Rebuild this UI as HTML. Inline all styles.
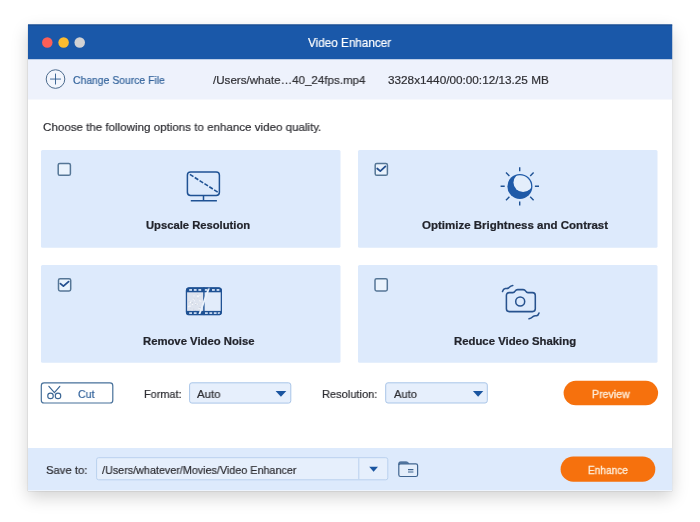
<!DOCTYPE html>
<html><head><meta charset="utf-8"><title>Video Enhancer</title>
<style>
*{box-sizing:border-box;margin:0;padding:0}
html,body{width:700px;height:522px;background:#fff;overflow:hidden}
body{font-family:"Liberation Sans",sans-serif;position:relative}
.a{position:absolute}
.t{position:absolute;white-space:nowrap;line-height:20px;height:20px;will-change:transform}
.t{-webkit-text-stroke:.2px}
#t_l1,#t_l2,#t_l3,#t_l4{-webkit-text-stroke:.22px}
#t_prev,#t_enh{-webkit-text-stroke:.35px}
#win{left:28px;top:25px;width:644px;height:465.5px;background:#fff;box-shadow:0 6px 16px rgba(0,0,0,.18),0 0 1px rgba(0,0,0,.3)}
.cb{position:absolute;width:13.4px;height:13.3px;border:1.3px solid #4d7196;background:#eaf3fd;border-radius:2px}
.sel{position:absolute;border:1px solid #a6c3e6;background:#e6effc;border-radius:2.5px}
.btn{position:absolute;background:#f6710d;border-radius:13px}
</style></head><body>
<div id="win" class="a"></div>
<svg class="a" style="left:0;top:0" width="700" height="522" viewBox="0 0 700 522">
 <rect x="28" y="24.5" width="644.2" height="466" fill="#fff"/>
 <rect x="28" y="24.5" width="644.2" height="35" fill="#1a58a9"/>
 <rect x="28" y="24.5" width="644.2" height="1" fill="#18488a"/>
 <rect x="28" y="59.5" width="644.2" height="40" fill="#eef2fc"/>
 <rect x="28" y="448" width="644.2" height="42.5" fill="#ddeafc"/>
 <circle cx="47.3" cy="42.5" r="5.25" fill="#fc5f57"/>
 <circle cx="63.6" cy="42.5" r="5.25" fill="#fdbc2e"/>
 <circle cx="79.7" cy="42.5" r="5.25" fill="#d2d2d4"/>
 <g fill="#ddeafc">
  <rect x="41" y="150.1" width="299.5" height="97.6" rx="1.5"/>
  <rect x="358" y="150.1" width="299.5" height="97.6" rx="1.5"/>
  <rect x="41" y="265" width="299.5" height="97.7" rx="1.5"/>
  <rect x="358" y="265" width="299.5" height="97.7" rx="1.5"/>
 </g>
</svg>
<svg class="a" style="left:44px;top:68px" width="24" height="24" viewBox="0 0 24 24"><circle cx="11.5" cy="11.05" r="9.3" fill="#f3f6fd" stroke="#4d6c8e" stroke-width="1"/><path d="M11.5 5.6v10.900000M6.050000 11.05h10.900000" stroke="#2c5a8c" stroke-width=".9" fill="none"/></svg>


<svg class="a" style="left:0;top:0" width="700" height="400" viewBox="0 0 700 400">
<g fill="#eaf3fd" stroke="#557696" stroke-width="1.5">
  <rect x="58.2" y="163.4" width="12.2" height="11.900000" rx="1.600000"/>
  <rect x="375.200000" y="163.4" width="12.200000" height="11.900000" rx="1.600000"/>
  <rect x="58.500000" y="278.750000" width="12.200000" height="12.200000" rx="1.600000"/>
  <rect x="375" y="278.750000" width="12.300000" height="12.200000" rx="1.600000"/>
 </g>
 <g fill="none" stroke="#234e8e" stroke-width="1.800000" stroke-linecap="round" stroke-linejoin="round">
  <path d="M377.200000 168.500000L380.300000 171.100000L385.400000 166.400000"/>
  <path d="M60.400000 283.600000L63.400000 286.100000L68.600000 281.600000"/>
 </g>
</svg>

<!-- monitor icon -->
<svg class="a" style="left:180px;top:165px" width="48" height="42" viewBox="0 0 48 42">
 <rect x="7.4" y="6.9" width="32" height="23.6" rx="3.2" fill="none" stroke="#1f5294" stroke-width="1.5"/>
 <path d="M23.5 30.5v5.2M10.8 35.7h26.1" stroke="#1f5294" stroke-width="1.5" fill="none"/>
 <path d="M9.9 9.4L37.8 27.2" stroke="#1f5294" stroke-width="1.6" stroke-dasharray="4.2 1.55" fill="none"/>
</svg>

<!-- brightness icon -->
<svg class="a" style="left:496px;top:162px" width="48" height="48" viewBox="0 0 48 48">
 <defs><clipPath id="sc"><circle cx="23.9" cy="24.4" r="11.25"/></clipPath></defs>
 <g stroke="#1f5294" stroke-width="1.4" fill="none">
  <path d="M23.7 5.2v4.1M23.7 39.5v4.1M4.6 24.3h4.1M38.9 24.3h4.1"/>
  <path d="M10 10.600000l3.400000 3.400000M37.600000 10.600000l-3.400000 3.400000M10 38.2l3.400000-3.400000M37.600000 38.2l-3.400000-3.400000"/>
 </g>
 <circle cx="23.9" cy="24.4" r="12.5" fill="#1f5aa8"/>
 <circle cx="27.1" cy="20.5" r="9.600000" fill="#e4eefb" clip-path="url(#sc)"/>
</svg>

<!-- film icon -->
<svg class="a" style="left:180px;top:282px" width="48" height="40" viewBox="0 0 48 40">
 <defs><clipPath id="fc"><rect x="5.8" y="5.3" width="36.2" height="28" rx="3.5"/></clipPath></defs>
 <g clip-path="url(#fc)">
  <rect x="5.8" y="5.3" width="36.2" height="28" fill="#e2ecfa"/>
  <rect x="5.8" y="5.3" width="18" height="28" fill="#dcdfe8" opacity=".6"/>
  <rect x="11.5" y="20.3" width="1.5" height="1.2" fill="#c9cfdb"/><rect x="16.4" y="21.3" width="1.2" height="1.2" fill="#f0f3f9"/><rect x="11.4" y="27.9" width="1.5" height="1" fill="#f0f3f9"/><rect x="17.3" y="13.6" width="1.5" height="1.2" fill="#ffffff"/><rect x="8.2" y="24.2" width="0.8" height="1" fill="#ffffff"/><rect x="19.3" y="25.0" width="1.5" height="1.2" fill="#c9cfdb"/><rect x="18.4" y="25.9" width="1.5" height="1.2" fill="#f0f3f9"/><rect x="19.6" y="18.6" width="1.2" height="0.8" fill="#ffffff"/><rect x="8.5" y="19.4" width="1.5" height="1.2" fill="#c9cfdb"/><rect x="20.4" y="18.2" width="1.2" height="1.2" fill="#f0f3f9"/><rect x="16.5" y="20.9" width="0.8" height="1" fill="#c9cfdb"/><rect x="10.4" y="25.6" width="0.8" height="1.2" fill="#d4d9e4"/><rect x="17.5" y="21.8" width="1.2" height="1" fill="#d4d9e4"/><rect x="9.8" y="19.2" width="0.8" height="1" fill="#f0f3f9"/><rect x="19.6" y="18.0" width="0.8" height="1" fill="#ffffff"/><rect x="14.2" y="18.1" width="0.8" height="1.2" fill="#f4f7fc"/><rect x="16.9" y="11.8" width="1.2" height="1.2" fill="#d4d9e4"/><rect x="15.3" y="28.0" width="0.8" height="0.8" fill="#c9cfdb"/><rect x="9.6" y="20.1" width="1.5" height="1" fill="#ffffff"/><rect x="16.9" y="13.7" width="1.2" height="1" fill="#f4f7fc"/><rect x="13.2" y="13.4" width="1.5" height="1" fill="#f0f3f9"/><rect x="20.6" y="17.6" width="0.8" height="1.2" fill="#d4d9e4"/><rect x="11.9" y="21.8" width="1.2" height="1" fill="#ffffff"/><rect x="22.2" y="19.9" width="1.2" height="0.8" fill="#d4d9e4"/><rect x="19.4" y="27.8" width="0.8" height="1" fill="#c9cfdb"/><rect x="16.9" y="21.7" width="1.2" height="1" fill="#f4f7fc"/><rect x="13.1" y="26.6" width="1.2" height="1.2" fill="#d4d9e4"/><rect x="15.1" y="21.0" width="1.2" height="1" fill="#f4f7fc"/><rect x="17.1" y="16.1" width="1.2" height="0.8" fill="#d4d9e4"/><rect x="13.3" y="16.3" width="1.2" height="1" fill="#c9cfdb"/><rect x="19.4" y="12.8" width="1" height="1" fill="#f4f7fc"/><rect x="15.3" y="22.1" width="1" height="1" fill="#c9cfdb"/><rect x="10.7" y="18.4" width="0.8" height="1.2" fill="#f4f7fc"/><rect x="12.7" y="16.7" width="1.5" height="0.8" fill="#ffffff"/><rect x="9.2" y="23.6" width="1.5" height="1" fill="#ffffff"/>
  <rect x="5.8" y="5.3" width="36.2" height="5" fill="#1f5294"/>
  <rect x="5.8" y="28.9" width="36.2" height="4.4" fill="#1f5294"/>
  <g fill="#dbe8fa">
   <rect x="9.2" y="7.1" width="2.8" height="1.7"/><rect x="13.8" y="7.1" width="2.8" height="1.7"/><rect x="18.4" y="7.1" width="2.8" height="1.7"/><rect x="24.6" y="7.1" width="2.400000" height="1.7"/><rect x="32" y="7.1" width="2.8" height="1.7"/><rect x="36.6" y="7.1" width="2.8" height="1.7"/>
   <rect x="9.2" y="30.3" width="2.8" height="1.6"/><rect x="13.8" y="30.3" width="2.8" height="1.6"/><rect x="25" y="30.3" width="2.8" height="1.6"/><rect x="29.4" y="30.3" width="2.8" height="1.6"/><rect x="33.8" y="30.3" width="2.8" height="1.6"/><rect x="37.800000" y="30.3" width="2.2" height="1.6"/>
  </g>
  <path d="M23.9 5.3v28" stroke="#1f5294" stroke-width="1.4"/>
  <path d="M29.5 4.5L18.700000 34" stroke="#eaf2fc" stroke-width="1.9"/>
 </g>
 <rect x="6.45" y="5.95" width="34.9" height="26.7" rx="3" fill="none" stroke="#1f5294" stroke-width="1.3"/>
</svg>

<!-- camera icon -->
<svg class="a" style="left:496px;top:279px" width="48" height="46" viewBox="0 0 48 46">
 <g fill="none" stroke="#27528e" stroke-width="1.55" stroke-linecap="round" stroke-linejoin="round">
  <path d="M13.2 13.6h3.6c1.2 0 1.7-.5 2.3-1.5c.7-1.1 1.3-1.5 2.6-1.5h5.4c1.3 0 1.9.4 2.6 1.5c.6 1 1.1 1.5 2.3 1.5h4.5c1.7 0 2.8 1.1 2.8 2.8v13.4c0 1.7-1.100000 2.800000-2.800000 2.800000h-23.300000c-1.700000 0-2.800000-1.100000-2.800000-2.800000v-13.400000c0-1.700000 1.100000-2.800000 2.800000-2.800000z"/>
  <circle cx="24.2" cy="22.4" r="4.5"/>
  <path d="M6.500000 12.400000c.5-1.600000 1.400000-2.600000 2.800000-2.800000c1.400000-.2 2.100000.2 3.200000-.6c1.200000-.9 1.500000-2.100000 4.300000-2.500000"/>
  <path d="M33 39.800000c2.800000-.4 3.100000-1.600000 4.300000-2.500000c1.100000-.8 1.800000-.4 3.200000-.6c1.400000-.2 2.100000-1.200000 2.500000-2.700000"/>
 </g>
</svg>

<!-- controls -->
<svg class="a" style="left:0;top:370px" width="700" height="120" viewBox="0 370 700 120">
 <rect x="41.3" y="382.9" width="71.5" height="20.1" rx="2.8" fill="#fff" stroke="#47709a" stroke-width="1.2"/>
 <g fill="none" stroke="#3a6594" stroke-width="1.15" stroke-linecap="round" stroke-linejoin="round">
  <circle cx="50.5" cy="395.9" r="2.75"/><circle cx="58" cy="395.9" r="2.75"/>
  <path d="M48.9 386.3L54.4 392.7L59.8 386.3"/>
 </g>
 <g fill="#e6effc" stroke="#a9c5e8" stroke-width="1">
  <rect x="189.6" y="382.8" width="101.2" height="20.3" rx="2.3"/>
  <rect x="385.7" y="382.8" width="101.6" height="20.2" rx="2.3"/>
  <rect x="96.6" y="457.7" width="291.2" height="22.1" rx="2" stroke="#bad1ee"/>
 </g>
 <path d="M358.8 458.2v21.1" stroke="#bad1ee" stroke-width="1" fill="none"/>
 <g fill="#1a55a0">
  <path d="M275.6 391h10.700000l-5.350000 5.800000z"/>
  <path d="M472.900000 391h10.400000l-5.200000 5.800000z"/>
  <path d="M369.200000 466.800000h8.800000l-4.400000 4.900000z"/>
 </g>
 <rect x="563.6" y="380.8" width="94.5" height="24.5" rx="12.25" fill="#f6710d"/>
 <rect x="560.6" y="456.5" width="94.7" height="25.3" rx="12.65" fill="#f6710d"/>
 <!-- folder -->
 <path d="M398.800000 465v-1.700000c0-.9.5-1.400000 1.400000-1.400000h6.300000c.9 0 1.300000.3 1.800000 1.000000l1.100000 2.100000z" fill="#5d7fa8" stroke="#3f648f" stroke-width="1"/>
 <rect x="398.800000" y="463.800000" width="18.800000" height="12.700000" rx="1.800000" fill="#e4eefb" stroke="#3f648f" stroke-width="1.2"/>
 <path d="M408 469.600000h5.400000M408 472h5.400000" stroke="#3f648f" stroke-width="1.100000" fill="none"/>
</svg>

<div id="t_title" class="t" style="left:307.90px;top:32.71px;font-size:12.1px;font-weight:normal;color:#fff;transform-origin:0 50%;transform:scaleX(0.9692)">Video Enhancer</div>
<div id="t_change" class="t" style="left:72.60px;top:70.29px;font-size:10.7px;font-weight:normal;color:#33639b;transform-origin:0 50%;transform:scaleX(0.9717)">Change Source File</div>
<div id="t_file" class="t" style="left:212.80px;top:69.98px;font-size:11.6px;font-weight:normal;color:#2f2f34;transform-origin:0 50%;transform:scaleX(0.9978)">/Users/whate…40_24fps.mp4</div>
<div id="t_info" class="t" style="left:387.70px;top:70.28px;font-size:11.6px;font-weight:normal;color:#2f2f34;transform-origin:0 50%;transform:scaleX(1.0140)">3328x1440/00:00:12/13.25 MB</div>
<div id="t_choose" class="t" style="left:43.20px;top:116.95px;font-size:11.7px;font-weight:normal;color:#2c2c31;transform-origin:0 50%;transform:scaleX(0.9903)">Choose the following options to enhance video quality.</div>
<div id="t_l1" class="t" style="left:146.40px;top:215.42px;font-size:11.2px;font-weight:bold;color:#22242c;transform-origin:0 50%;transform:scaleX(1.0026)">Upscale Resolution</div>
<div id="t_l2" class="t" style="left:422.00px;top:215.42px;font-size:11.2px;font-weight:bold;color:#22242c;transform-origin:0 50%;transform:scaleX(1.0288)">Optimize Brightness and Contrast</div>
<div id="t_l3" class="t" style="left:142.60px;top:330.92px;font-size:11.2px;font-weight:bold;color:#22242c;transform-origin:0 50%;transform:scaleX(1.0093)">Remove Video Noise</div>
<div id="t_l4" class="t" style="left:454.00px;top:330.92px;font-size:11.2px;font-weight:bold;color:#22242c;transform-origin:0 50%;transform:scaleX(1.0141)">Reduce Video Shaking</div>
<div id="t_cut" class="t" style="left:78.00px;top:383.85px;font-size:11.4px;font-weight:normal;color:#33639b;transform-origin:0 50%;transform:scaleX(0.9360)">Cut</div>
<div id="t_format" class="t" style="left:143.50px;top:383.82px;font-size:11.5px;font-weight:normal;color:#2c2c31;transform-origin:0 50%;transform:scaleX(0.9489)">Format:</div>
<div id="t_auto1" class="t" style="left:197.10px;top:383.65px;font-size:11.7px;font-weight:normal;color:#2c2c31;transform-origin:0 50%;transform:scaleX(0.9773)">Auto</div>
<div id="t_res" class="t" style="left:321.70px;top:383.78px;font-size:11.6px;font-weight:normal;color:#2c2c31;transform-origin:0 50%;transform:scaleX(0.9549)">Resolution:</div>
<div id="t_auto2" class="t" style="left:393.60px;top:383.68px;font-size:11.6px;font-weight:normal;color:#2c2c31;transform-origin:0 50%;transform:scaleX(0.9598)">Auto</div>
<div id="t_prev" class="t" style="left:591.60px;top:383.75px;font-size:11.1px;font-weight:normal;color:#fdebd6;transform-origin:0 50%;transform:scaleX(0.9552)">Preview</div>
<div id="t_save" class="t" style="left:45.70px;top:459.85px;font-size:11.7px;font-weight:normal;color:#2c2c31;transform-origin:0 50%;transform:scaleX(0.9629)">Save to:</div>
<div id="t_path" class="t" style="left:102.30px;top:459.95px;font-size:11.4px;font-weight:normal;color:#2c2c31;transform-origin:0 50%;transform:scaleX(0.9457)">/Users/whatever/Movies/Video Enhancer</div>
<div id="t_enh" class="t" style="left:587.90px;top:460.12px;font-size:10.9px;font-weight:normal;color:#fdebd6;transform-origin:0 50%;transform:scaleX(0.9256)">Enhance</div>
</body></html>
